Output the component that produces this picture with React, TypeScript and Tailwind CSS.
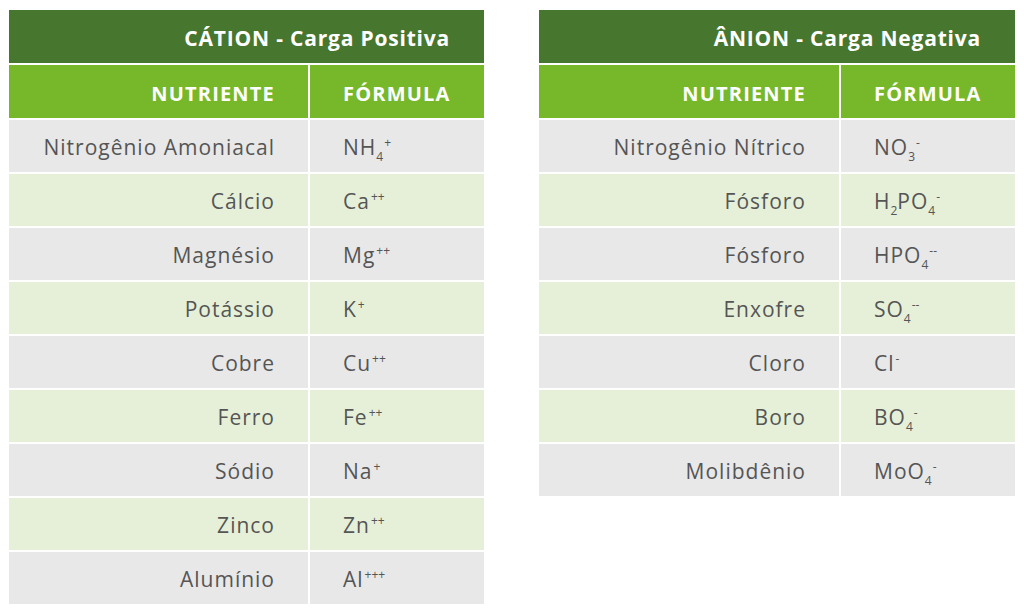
import React from "react";

type Part = { t: string; sub?: string; sup?: string };
type Row = { name: string; f: Part[] };

const cations: Row[] = [
  { name: "Nitrogênio Amoniacal", f: [{ t: "NH", sub: "4", sup: "+" }] },
  { name: "Cálcio", f: [{ t: "Ca", sup: "++" }] },
  { name: "Magnésio", f: [{ t: "Mg", sup: "++" }] },
  { name: "Potássio", f: [{ t: "K", sup: "+" }] },
  { name: "Cobre", f: [{ t: "Cu", sup: "++" }] },
  { name: "Ferro", f: [{ t: "Fe", sup: "++" }] },
  { name: "Sódio", f: [{ t: "Na", sup: "+" }] },
  { name: "Zinco", f: [{ t: "Zn", sup: "++" }] },
  { name: "Alumínio", f: [{ t: "Al", sup: "+++" }] },
];

const anions: Row[] = [
  { name: "Nitrogênio Nítrico", f: [{ t: "NO", sub: "3", sup: "-" }] },
  { name: "Fósforo", f: [{ t: "H", sub: "2" }, { t: "PO", sub: "4", sup: "-" }] },
  { name: "Fósforo", f: [{ t: "HPO", sub: "4", sup: "--" }] },
  { name: "Enxofre", f: [{ t: "SO", sub: "4", sup: "--" }] },
  { name: "Cloro", f: [{ t: "Cl", sup: "-" }] },
  { name: "Boro", f: [{ t: "BO", sub: "4", sup: "-" }] },
  { name: "Molibdênio", f: [{ t: "MoO", sub: "4", sup: "-" }] },
];

function Formula({ parts }: { parts: Part[] }) {
  return (
    <span className="whitespace-nowrap">
      {parts.map((p, i) => (
        <React.Fragment key={i}>
          {p.t}
          {p.sub && (
            <span className="relative top-[6px] text-[12px] leading-none tracking-normal">
              {p.sub}
            </span>
          )}
          {p.sup && (
            <span className="relative top-[-8px] ml-[1px] text-[12px] leading-none tracking-normal">
              {p.sup}
            </span>
          )}
        </React.Fragment>
      ))}
    </span>
  );
}

function Table({
  title,
  rows,
  cols,
  width,
}: {
  title: string;
  rows: Row[];
  cols: string;
  width: string;
}) {
  return (
    <div className={"flex flex-col gap-[2px] " + width}>
      <div className="flex h-[53px] items-center justify-end bg-[#47762e] pr-[34px] pt-[4px] text-[21px] font-bold tracking-[0.8px] text-white">
        {title}
      </div>
      <div className={"grid h-[53px] gap-x-[2px] " + cols}>
        <div className="flex items-center justify-end bg-[#76b82a] pr-[33px] pt-[4px] text-[20px] font-bold tracking-[1.2px] text-white">
          NUTRIENTE
        </div>
        <div className="flex items-center bg-[#76b82a] pl-[33px] pt-[4px] text-[20px] font-bold tracking-[1.2px] text-white">
          FÓRMULA
        </div>
      </div>
      {rows.map((r, i) => {
        const bg = i % 2 === 0 ? "bg-[#e8e8e8]" : "bg-[#e6f0d8]";
        return (
          <div key={i} className={"grid h-[52px] gap-x-[2px] " + cols}>
            <div
              className={
                "flex items-center justify-end pr-[33px] pt-[4px] text-[21px] tracking-[1px] text-[#555555] " +
                bg
              }
            >
              {r.name}
            </div>
            <div
              className={
                "flex items-center pl-[33px] pt-[4px] text-[21px] tracking-[1px] text-[#555555] " +
                bg
              }
            >
              <Formula parts={r.f} />
            </div>
          </div>
        );
      })}
    </div>
  );
}

export default function App() {
  return (
    <div
      className="flex h-[616px] w-[1024px] items-start gap-[55px] bg-white pl-[9px] pt-[10px]"
      style={{ fontFamily: '"Open Sans", "Liberation Sans", sans-serif' }}
    >
      <Table
        title="CÁTION - Carga Positiva"
        rows={cations}
        cols="grid-cols-[299px_174px]"
        width="w-[475px]"
      />
      <Table
        title="ÂNION - Carga Negativa"
        rows={anions}
        cols="grid-cols-[300px_174px]"
        width="w-[476px]"
      />
    </div>
  );
}
